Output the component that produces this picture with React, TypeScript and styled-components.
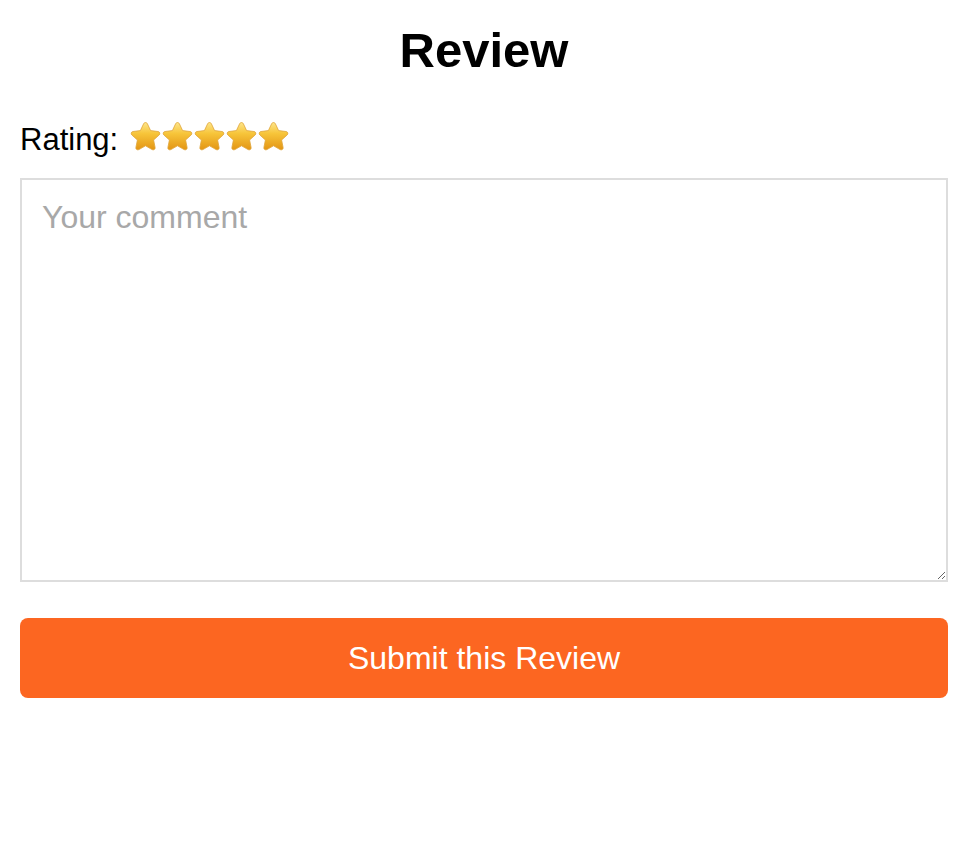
import React, { useState } from 'react'
import styled, { createGlobalStyle } from 'styled-components'

const GlobalStyle = createGlobalStyle`
  body {
    margin: 0;
    background: #ffffff;
    font-family: 'Liberation Sans', Arial, sans-serif;
  }
`

const Page = styled.div`
  padding: 20px 26px 20px 20px;
  display: flex;
  flex-direction: column;
`

const Title = styled.h1`
  margin: 0 0 42px;
  text-align: center;
  font-size: 49px;
  font-weight: 700;
  line-height: 60px;
  color: #000;
`

const RatingRow = styled.div`
  display: flex;
  align-items: center;
  gap: 12px;
  font-size: 31px;
  line-height: 36px;
  color: #000;
  margin-bottom: 20px;
`

const Stars = styled.div`
  display: flex;
  gap: 1px;
  margin-top: -6px;
`

const StarButton = styled.button`
  border: none;
  background: none;
  padding: 0;
  width: 31px;
  height: 32px;
  cursor: pointer;
`

const Comment = styled.textarea`
  box-sizing: border-box;
  width: 100%;
  height: 404px;
  padding: 19px 20px;
  border: 2px solid #dddddd;
  border-radius: 0;
  font-family: inherit;
  font-size: 32px;
  line-height: 36px;
  color: #000;
  outline: none;
  resize: vertical;
  margin: 0 0 36px;

  &::placeholder {
    color: #a8a8a8;
  }
`

const SubmitButton = styled.button`
  height: 80px;
  width: 100%;
  border: none;
  border-radius: 8px;
  background: #fc6621;
  color: #ffffff;
  font-family: inherit;
  font-size: 32px;
  cursor: pointer;
`

const Star = ({ id }: { id: number }) => (
  <svg width="31" height="32" viewBox="0 0 31 32">
    <defs>
      <linearGradient id={`sg${id}`} x1="0" y1="0" x2="0" y2="1">
        <stop offset="0" stopColor="#fde58a" />
        <stop offset="0.4" stopColor="#f7c53a" />
        <stop offset="1" stopColor="#e39514" />
      </linearGradient>
    </defs>
    <path
      d="M15.5 1.5c.9 0 1.5.5 1.9 1.3l3.2 6.8 7.4.9c1.8.2 2.5 2.3 1.1 3.5l-5.5 5 1.5 7.4c.4 1.8-1.5 3-3 2.2l-6.6-3.8-6.6 3.8c-1.5.8-3.4-.4-3-2.2l1.5-7.4-5.5-5C.5 12.8 1.2 10.7 3 10.5l7.4-.9 3.2-6.8c.4-.8 1-1.3 1.9-1.3z"
      fill={`url(#sg${id})`}
      stroke="#e0a43a"
      strokeWidth="0.8"
    />
  </svg>
)

export default function App() {
  const [rating, setRating] = useState(5)
  const [comment, setComment] = useState('')

  return (
    <Page>
      <GlobalStyle />
      <Title>Review</Title>
      <RatingRow>
        Rating:
        <Stars>
          {[1, 2, 3, 4, 5].map((n) => (
            <StarButton key={n} type="button" onClick={() => setRating(n)} aria-label={`${n} stars`}>
              {n <= rating && <Star id={n} />}
            </StarButton>
          ))}
        </Stars>
      </RatingRow>
      <Comment
        placeholder="Your comment"
        value={comment}
        onChange={(e) => setComment(e.target.value)}
      />
      <SubmitButton type="button">Submit this Review</SubmitButton>
    </Page>
  )
}
